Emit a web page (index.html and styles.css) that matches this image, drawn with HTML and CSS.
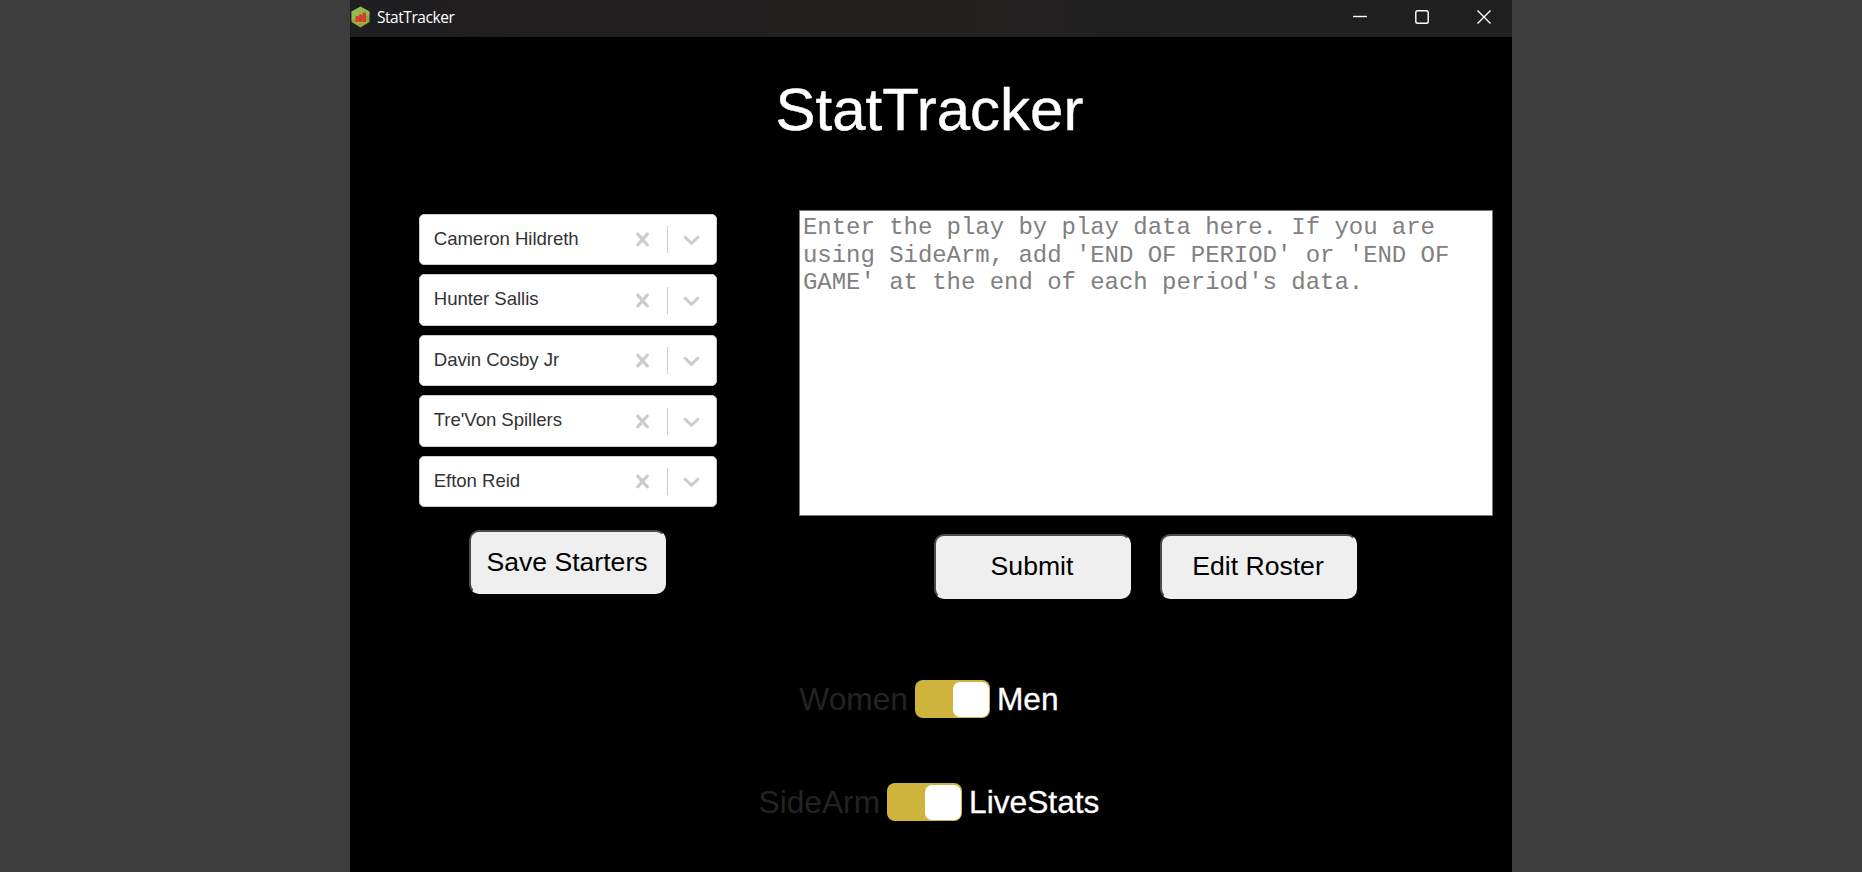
FILE: index.html
```
<!DOCTYPE html>
<html lang="en">
<head>
<meta charset="utf-8">
<title>StatTracker</title>
<link rel="stylesheet" href="styles.css">
</head>
<body>
<div class="window">
  <header class="titlebar">
    <svg class="app-icon" width="19" height="22" viewBox="0 0 19 22"><path d="M9.5 0.5 18.5 5.500V16L9.500 21.500 .5 16V5.500Z" fill="#86ad41"/><path d="M9.500 .5 18.500 5.500V9L.5 14V5.500Z" fill="#9dc655" opacity=".5"/><path d="M4.500 10h3.300v6H4.500zM8 8.500h3.300V16H8zM11.500 6.500h3.500V16h-3.500z" fill="#d93a32"/><path d="M4 16h11.500v1.200H4z" fill="#d9a33a"/></svg>
    <span class="app-name">StatTracker</span>
    <div class="controls">
      <svg width="16" height="16" viewBox="0 0 16 16"><path d="M1 7.500H15"/></svg>
      <svg width="16" height="16" viewBox="0 0 16 16"><rect x="1.800" y="1.800" width="12.400" height="12.400" rx="1.800"/></svg>
      <svg width="16" height="16" viewBox="0 0 16 16"><path d="M1.500 1.500 14.500 14.500M14.500 1.500 1.500 14.500"/></svg>
    </div>
  </header>
  <h1 class="heading">StatTracker</h1>
  <svg class="defs" width="0" height="0">
    <symbol id="cross" viewBox="0 0 20 20"><path d="M14.348 14.849c-0.469 0.469-1.229 0.469-1.697 0l-2.651-3.030-2.651 3.029c-0.469 0.469-1.229 0.469-1.697 0-0.469-0.469-0.469-1.229 0-1.697l2.758-3.150-2.759-3.152c-0.469-0.469-0.469-1.228 0-1.697s1.228-0.469 1.697 0l2.652 3.031 2.651-3.031c0.469-0.469 1.228-0.469 1.697 0s0.469 1.229 0 1.697l-2.758 3.152 2.758 3.150c0.469 0.469 0.469 1.229 0 1.698z"/></symbol>
    <symbol id="chevron" viewBox="0 0 20 20"><path d="M4.516 7.548c0.436-0.446 1.043-0.481 1.576 0l3.908 3.747 3.908-3.747c0.533-0.481 1.141-0.446 1.574 0 0.436 0.445 0.408 1.197 0 1.615-0.406 0.418-4.695 4.502-4.695 4.502-0.217 0.223-0.502 0.335-0.787 0.335s-0.570-0.112-0.789-0.335c0 0-4.287-4.084-4.695-4.502s-0.436-1.170 0-1.615z"/></symbol>
  </svg>
  <main class="content">
    <section class="starters">
      <div class="selects">
        <div class="select"><span class="value">Cameron Hildreth</span><svg class="ic"><use href="#cross"/></svg><i class="sep"></i><svg class="ic"><use href="#chevron"/></svg></div>
        <div class="select"><span class="value">Hunter Sallis</span><svg class="ic"><use href="#cross"/></svg><i class="sep"></i><svg class="ic"><use href="#chevron"/></svg></div>
        <div class="select"><span class="value">Davin Cosby Jr</span><svg class="ic"><use href="#cross"/></svg><i class="sep"></i><svg class="ic"><use href="#chevron"/></svg></div>
        <div class="select"><span class="value">Tre'Von Spillers</span><svg class="ic"><use href="#cross"/></svg><i class="sep"></i><svg class="ic"><use href="#chevron"/></svg></div>
        <div class="select"><span class="value">Efton Reid</span><svg class="ic"><use href="#cross"/></svg><i class="sep"></i><svg class="ic"><use href="#chevron"/></svg></div>
      </div>
      <button class="btn">Save Starters</button>
    </section>
    <section class="plays">
      <textarea class="entry" placeholder="Enter the play by play data here. If you are using SideArm, add 'END OF PERIOD' or 'END OF GAME' at the end of each period's data."></textarea>
      <div class="actions">
        <button class="btn">Submit</button>
        <button class="btn">Edit Roster</button>
      </div>
    </section>
  </main>
  <div class="toggles">
    <div class="toggle-row"><span class="off">Women</span><span class="switch"><span class="knob"></span></span><span class="on">Men</span></div>
    <div class="toggle-row"><span class="off">SideArm</span><span class="switch"><span class="knob"></span></span><span class="on">LiveStats</span></div>
  </div>
</div>
</body>
</html>
```
FILE: styles.css
```
* { box-sizing: border-box; }
body {
  margin: 0;
  height: 872px;
  overflow: hidden;
  background: #3d3d3d;
  font-family: "Liberation Sans", Arial, sans-serif;
}
.window {
  width: 1162px;
  height: 872px;
  margin-left: 350px;
  background: #000;
  color: #fff;
}
.titlebar {
  display: flex;
  height: 37px;
  padding: 0 20px 3px 1px;
  align-items: center;
  background: linear-gradient(90deg, #1f1e20, #241f1f 45%, #202020 70%);
}
.app-name {
  margin-left: 7px;
  font: 15.500px "Open Sans", "Noto Sans", sans-serif;
  letter-spacing: -0.450px;
}
.controls {
  display: flex;
  gap: 46px;
  margin-left: auto;
  fill: none;
  stroke: #fff;
  stroke-width: 1.4;
}
.heading {
  margin: 0;
  padding: 38px 3px 0 0;
  height: 173px;
  font-size: 60px;
  font-weight: 400;
  line-height: 70px;
  text-align: center;
  -webkit-text-stroke: 0.4px #fff;
}
.defs { display: block; }
.content {
  display: flex;
  height: 408px;
  padding-left: 69px;
}
.starters {
  width: 298px;
  margin-right: 82px;
  padding-top: 4px;
  display: flex;
  flex-direction: column;
  align-items: center;
}
.selects {
  width: 298.500px;
  display: grid;
  gap: 9.300px;
  margin-bottom: 23px;
}
.select {
  display: flex;
  height: 51.200px;
  align-items: center;
  padding: 0 11px 0 14px;
  border: 1px solid #ccc;
  border-radius: 5px;
  background: #fff;
  color: #333;
  font-size: 18.600px;
}
.value { flex: 1; padding-bottom: 2px; letter-spacing: -0.050px; }
.ic { width: 27px; height: 27px; fill: #ccc; }
.sep { width: 1px; height: 27px; margin: 0 10.500px; background: #ccc; }
.btn {
  width: 197px;
  height: 65px;
  padding: 0;
  border: 2px solid;
  border-color: #4c4c4c #efefef #efefef #4c4c4c;
  border-radius: 10px;
  background: #efefef;
  color: #000;
  font-family: inherit;
  font-size: 26.600px;
}
.starters .btn { height: 64px; margin-right: 2px; }
.plays { width: 694px; }
.entry {
  display: block;
  width: 694px;
  height: 306px;
  padding: 3px;
  border: 1px solid #767676;
  resize: none;
  background: #fff;
  font: 24px/27.600px "Liberation Mono", monospace;
  letter-spacing: -0.040px;
}
.entry::placeholder { color: #808080; }
.actions {
  display: flex;
  justify-content: center;
  gap: 29px;
  padding: 18px 2px 0 0;
}
.toggles {
  display: flex;
  flex-direction: column;
  gap: 65px;
  padding-top: 62px;
}
.toggle-row {
  display: flex;
  height: 38px;
  justify-content: center;
  align-items: center;
  gap: 7px;
  font-size: 31.700px;
  line-height: 36px;
  padding-right: 4px;
}
.toggle-row span:not(.switch, .knob) { padding-bottom: 1px; }
.off { color: #232323; }
.on { -webkit-text-stroke: 0.3px #fff; }
.switch {
  display: flex;
  justify-content: flex-end;
  width: 75px;
  height: 38px;
  padding: 2px 1px 1px 0;
  border-radius: 8px;
  background: #ceb43d;
}
.knob { width: 36px; border-radius: 7px; background: #fff; }
```
